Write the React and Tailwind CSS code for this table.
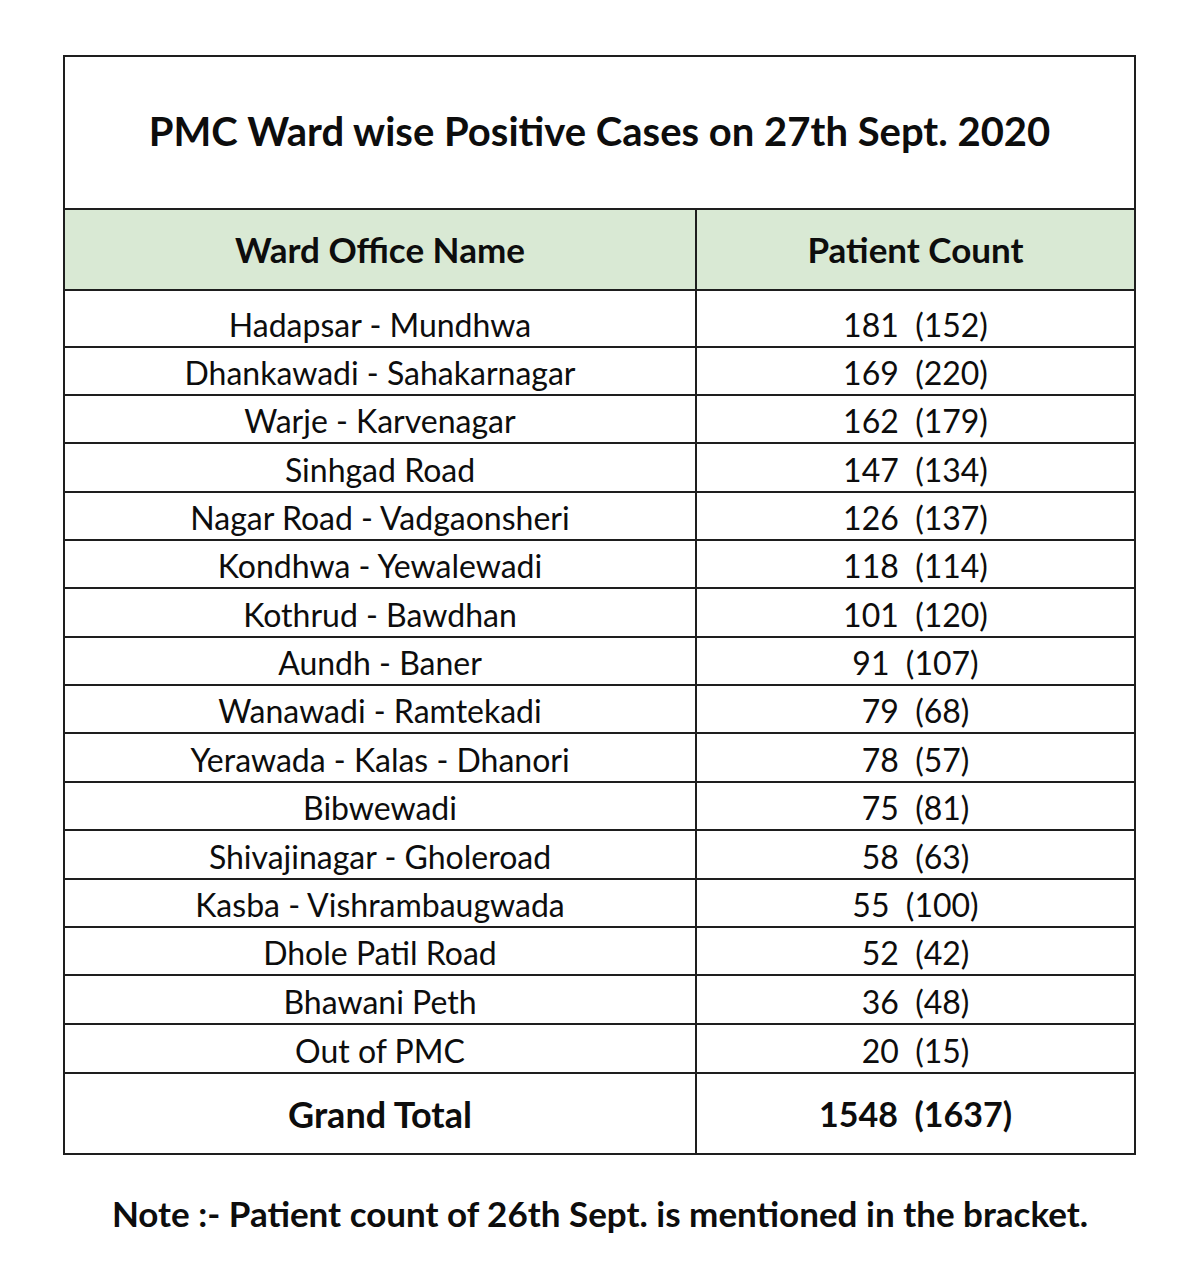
import React from "react";

const rows = [
  ["Hadapsar - Mundhwa", "181  (152)", 57],
  ["Dhankawadi - Sahakarnagar", "169  (220)", 48],
  ["Warje - Karvenagar", "162  (179)", 48],
  ["Sinhgad Road", "147  (134)", 49],
  ["Nagar Road - Vadgaonsheri", "126  (137)", 48],
  ["Kondhwa - Yewalewadi", "118  (114)", 48],
  ["Kothrud - Bawdhan", "101  (120)", 49],
  ["Aundh - Baner", "91  (107)", 48],
  ["Wanawadi - Ramtekadi", "79  (68)", 48],
  ["Yerawada - Kalas - Dhanori", "78  (57)", 49],
  ["Bibwewadi", "75  (81)", 48],
  ["Shivajinagar - Gholeroad", "58  (63)", 49],
  ["Kasba - Vishrambaugwada", "55  (100)", 48],
  ["Dhole Patil Road", "52  (42)", 48],
  ["Bhawani Peth", "36  (48)", 49],
  ["Out of PMC", "20  (15)", 49],
];

export default function App() {
  return (
    <div
      className="w-[1200px] h-[1265px] bg-white pt-[55px] text-[#0d0d0d]"
      style={{ fontFamily: "Lato, 'Open Sans', sans-serif" }}
    >
      <div className="ml-[63px] w-[1073px] border-2 border-[#1e1e1e]">
        <div className="h-[153px] flex items-center justify-center border-b-2 border-[#1e1e1e] text-[40px] font-bold pb-[4px]">
          PMC Ward wise Positive Cases on 27th Sept. 2020
        </div>
        <div className="grid grid-cols-[632px_1fr] h-[81px] bg-[#d9e9d4] border-b-2 border-[#1e1e1e] text-[35px] font-bold">
          <div className="flex items-center justify-center border-r-2 border-[#1e1e1e]">Ward Office Name</div>
          <div className="flex items-center justify-center">Patient Count</div>
        </div>
        {rows.map(([name, count, h], i) => (
          <div
            key={i}
            className="grid grid-cols-[632px_1fr] border-b-2 border-[#1e1e1e] text-[32px] leading-[38px]"
            style={{ height: h }}
          >
            <div className="flex items-end justify-center pb-[2px] border-r-2 border-[#1e1e1e]">{name}</div>
            <div className="flex items-end justify-center pb-[2px] whitespace-pre">{count}</div>
          </div>
        ))}
        <div className="grid grid-cols-[632px_1fr] h-[79px] font-bold">
          <div className="flex items-center justify-center border-r-2 border-[#1e1e1e] text-[36px]">Grand Total</div>
          <div className="flex items-center justify-center whitespace-pre text-[34px]">1548  (1637)</div>
        </div>
      </div>
      <div className="mt-[32px] flex justify-center text-[35px] font-bold">
        Note :- Patient count of 26th Sept. is mentioned in the bracket.
      </div>
    </div>
  );
}
